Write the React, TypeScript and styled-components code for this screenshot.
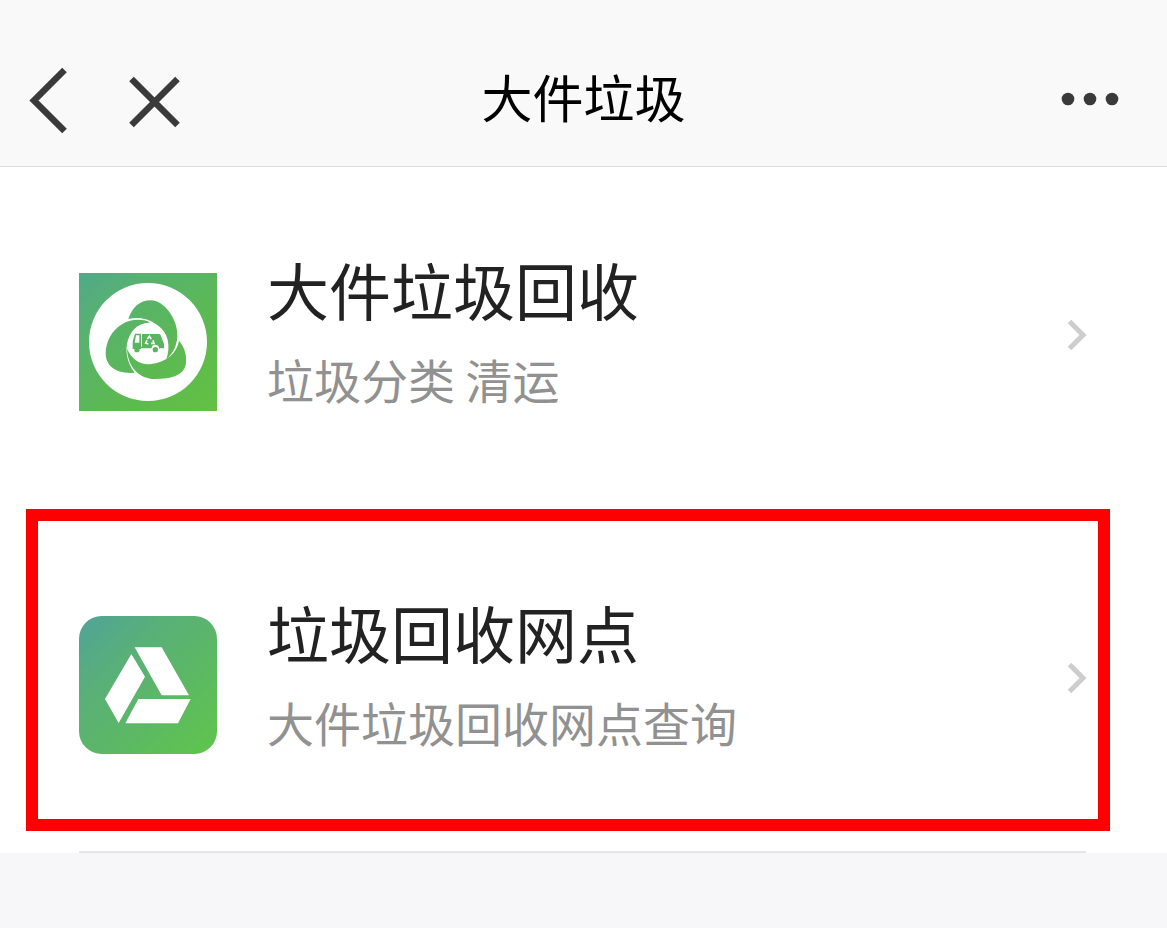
import React from "react";
import styled, { createGlobalStyle } from "styled-components";

const GlobalStyle = createGlobalStyle`
  *, *::before, *::after { box-sizing: border-box; }
  body {
    margin: 0;
    background: #f7f7fa;
    font-family: "Noto Sans CJK SC", "Noto Sans", sans-serif;
  }
  svg { display: block; }
`;

const Header = styled.header`
  display: grid;
  grid-template-columns: 1fr auto 1fr;
  align-items: center;
  padding: 38px 28px 4px;
  background: #f9f9f9;
  border-bottom: 1px solid #dedede;
`;

const HeaderGroup = styled.div<{ $align: "start" | "end" }>`
  display: flex;
  align-items: center;
  justify-content: ${(p) => p.$align};
  gap: 60px;
`;

const IconButton = styled.button`
  padding: 0;
  border: 0;
  background: none;
  color: #3a3a3a;
  cursor: pointer;
`;

const Title = styled.h1`
  margin: 0;
  padding: 26px 0 34px;
  font-size: 51px;
  line-height: 64px;
  font-weight: 400;
  color: #000;
`;

const List = styled.ul`
  margin: 0;
  padding: 0;
  list-style: none;
  background: #fff;
`;

const Item = styled.li`
  position: relative;
`;

const ItemLink = styled.a`
  display: flex;
  align-items: center;
  gap: 50px;
  min-height: 343px;
  padding: 0 80px 8px 79px;
  color: inherit;
  text-decoration: none;
`;

const IconSlot = styled.span`
  flex: none;
  padding-top: 14px;
`;

const ItemText = styled.span`
  display: flex;
  flex: 1;
  flex-direction: column;
  gap: 12px;
  padding-bottom: 8px;
`;

const ItemTitle = styled.span`
  font-size: 62px;
  line-height: 84px;
  color: #222;
`;

const ItemNote = styled.span`
  font-size: 47px;
  line-height: 72px;
  color: #919191;
`;

const Divider = styled.hr`
  position: absolute;
  right: 81px;
  bottom: 0;
  left: 79px;
  height: 2px;
  margin: 0;
  border: 0;
  background: #e5e5e7;
`;

const Highlight = styled.div`
  position: absolute;
  inset: -1px 57px 22px 26px;
  border: 12px solid #fe0000;
  pointer-events: none;
`;

const BackIcon = () => (
  <svg width="41" height="68" viewBox="0 0 41 68" fill="none" stroke="currentColor" strokeWidth="6.500" aria-hidden="true">
    <path d="M36.5 4 6 34.500l30.5 30.5" />
  </svg>
);

const CloseIcon = () => (
  <svg width="52" height="64" viewBox="0 0 52 64" fill="none" stroke="currentColor" strokeWidth="6.500" aria-hidden="true">
    <path d="M2.500 11l46 46M48.500 11l-46 46" />
  </svg>
);

const MoreIcon = () => (
  <svg width="80" height="20" viewBox="0 0 80 20" fill="currentColor" aria-hidden="true">
    <circle cx="9" cy="9" r="6.300" />
    <circle cx="31" cy="9" r="6.300" />
    <circle cx="53" cy="9" r="6.300" />
  </svg>
);

const Chevron = () => (
  <svg width="20" height="34" viewBox="0 0 20 34" fill="none" stroke="#cdcdcd" strokeWidth="5" aria-hidden="true">
    <path d="M2.500 3.500l13.500 13.500L2.500 30.500" />
  </svg>
);

const RecycleIcon = () => (
  <svg width="138" height="138" viewBox="27 39 414 414" aria-hidden="true">
    <defs>
      <linearGradient id="recycle" x1="27" y1="39" x2="400" y2="453" gradientUnits="userSpaceOnUse">
        <stop offset="0" stopColor="#51a88b" />
        <stop offset="0.250" stopColor="#57b270" />
        <stop offset="0.650" stopColor="#5cb952" />
        <stop offset="1" stopColor="#62c045" />
      </linearGradient>
    </defs>
    <rect x="27" y="39" width="414" height="414" fill="url(#recycle)" />
    <circle cx="234" cy="246" r="177" fill="#fff" />
    <g fill="url(#recycle)">
      <path d="M175 177C187 143 208 121 242 121c40 0 79 54 80 101 1 30-11 58-33 75 14-38 6-79-27-102-25-19-57-26-87-18Z" />
      <path d="M241 187c-26-11-58-10-84 5-31 18-50 53-50 88 0 39 33 63 87 58-23-29-31-69-19-101 11-29 35-46 66-50Z" />
      <path d="M327 242c18 20 25 50 20 73-7 30-40 42-92 42-47 0-82-36-84-91 14 32 41 50 73 46 46-6 77-33 83-70Z" />
    </g>
    <circle cx="234" cy="248" r="58" fill="#fff" />
    <g fill="#5bb460">
      <path fillRule="evenodd" d="M195 221h18v46h-25v-23Zm3 5-4 22h14v-22Z" />
      <path d="M216 222h50q4 0 6 4l10 26v13h-15a11 11 0 0 0-22 0h-34v-5h5Z" />
      <circle cx="201" cy="269" r="8" />
      <circle cx="256" cy="269" r="8" />
    </g>
    <path d="m232 237 6-8 6 8M249 241l3 9h-9M235 252l-8-3 4-8" fill="none" stroke="#fff" strokeWidth="5" />
  </svg>
);

const DriveIcon = () => (
  <svg width="138" height="138" viewBox="27 32 414 414" aria-hidden="true">
    <defs>
      <linearGradient id="drive" x1="50" y1="55" x2="410" y2="420" gradientUnits="userSpaceOnUse">
        <stop offset="0" stopColor="#52a593" />
        <stop offset="0.300" stopColor="#59b078" />
        <stop offset="0.650" stopColor="#5cb864" />
        <stop offset="1" stopColor="#5fc34f" />
      </linearGradient>
    </defs>
    <rect x="27" y="32" width="414" height="414" rx="68" fill="url(#drive)" />
    <path d="M194 126h81l82 144h-82ZM184 146l41 68-79 139-41-72ZM205 281h157l-38 73H166Z" fill="#fff" />
  </svg>
);

interface Service {
  title: string;
  note: string;
  icon: React.ReactNode;
  highlighted?: boolean;
}

const services: Service[] = [
  { title: "大件垃圾回收", note: "垃圾分类 清运", icon: <RecycleIcon /> },
  { title: "垃圾回收网点", note: "大件垃圾回收网点查询", icon: <DriveIcon />, highlighted: true },
];

export default function App() {
  return (
    <>
      <GlobalStyle />
      <Header>
        <HeaderGroup $align="start">
          <IconButton type="button" aria-label="返回"><BackIcon /></IconButton>
          <IconButton type="button" aria-label="关闭"><CloseIcon /></IconButton>
        </HeaderGroup>
        <Title>大件垃圾</Title>
        <HeaderGroup $align="end">
          <IconButton type="button" aria-label="更多"><MoreIcon /></IconButton>
        </HeaderGroup>
      </Header>
      <main>
        <List>
          {services.map((service) => (
            <Item key={service.title}>
              <ItemLink href="#">
                <IconSlot>{service.icon}</IconSlot>
                <ItemText>
                  <ItemTitle>{service.title}</ItemTitle>
                  <ItemNote>{service.note}</ItemNote>
                </ItemText>
                <Chevron />
              </ItemLink>
              {service.highlighted && <Divider />}
              {service.highlighted && <Highlight />}
            </Item>
          ))}
        </List>
      </main>
    </>
  );
}
